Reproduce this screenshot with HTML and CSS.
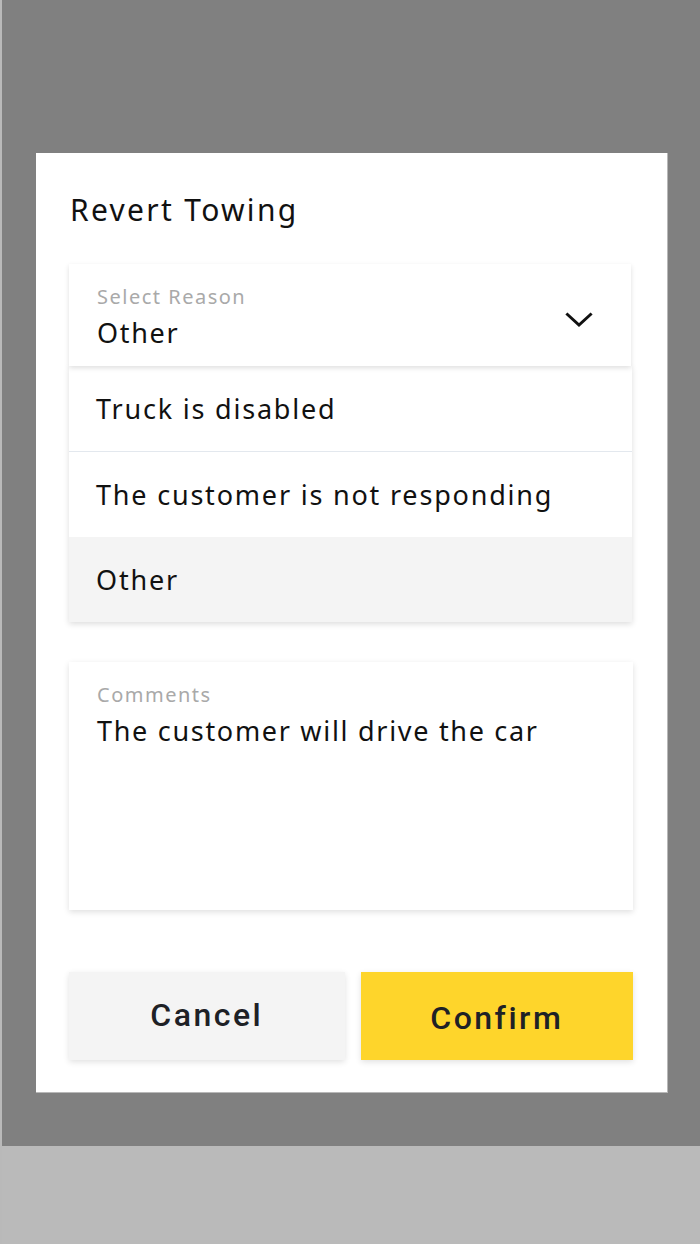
FILE: index.html
```html
<!DOCTYPE html>
<html lang="en">
<head>
<meta charset="utf-8">
<title>Revert Towing</title>
<link rel="stylesheet" href="styles.css">
</head>
<body>
<div class="screen">
  <div class="overlay">
    <div class="dialog">
      <h1 class="title">Revert Towing</h1>
      <div class="select-card">
        <div class="select-text">
          <div class="field-label">Select Reason</div>
          <div class="field-value">Other</div>
        </div>
        <svg class="chevron" width="28" height="16" viewBox="0 0 28 16" aria-hidden="true">
          <path d="M2.5 2.5 L14 13 L25.5 2.5" fill="none" stroke="#111" stroke-width="3" stroke-linecap="square"/>
        </svg>
      </div>
      <ul class="options">
        <li class="option option-divided">Truck is disabled</li>
        <li class="option">The customer is not responding</li>
        <li class="option option-selected">Other</li>
      </ul>
      <div class="comments-card">
        <div class="field-label">Comments</div>
        <div class="field-value">The customer will drive the car</div>
      </div>
      <div class="actions">
        <button class="btn btn-cancel">Cancel</button>
        <button class="btn btn-confirm">Confirm</button>
      </div>
    </div>
  </div>
  <div class="footer"></div>
</div>
</body>
</html>
```

FILE: styles.css
```css
* {
  box-sizing: border-box;
}

html, body {
  margin: 0;
  padding: 0;
}

body {
  font-family: "Noto Sans", "Liberation Sans", sans-serif;
  color: #111;
  background: #bababa;
}

.screen {
  width: 700px;
  height: 1244px;
  border-left: 2px solid #b9b9b9;
  display: flex;
  flex-direction: column;
}

.overlay {
  height: 1146px;
  background: #808080;
  padding-top: 153px;
  padding-left: 34px;
}

.footer {
  flex: 1;
  background: #bababa;
}

.dialog {
  width: 632px;
  height: 940px;
  background: #fff;
  border-right: 1px solid #b8b8b8;
  border-bottom: 1px solid #b8b8b8;
  padding: 38px 34px 0 33px;
  display: flex;
  flex-direction: column;
}

.title {
  margin: 0 0 35px 1px;
  font-size: 30px;
  line-height: 38px;
  font-weight: 400;
  letter-spacing: 2.3px;
  color: #111;
}

.select-card {
  position: relative;
  z-index: 2;
  height: 102px;
  margin-right: 2px;
  background: #fff;
  box-shadow: 0 2px 5px rgba(0, 0, 0, 0.13);
  padding: 21px 38px 0 28px;
  display: flex;
  align-items: flex-start;
}

.select-text {
  flex: 1;
}

.field-label {
  font-size: 20px;
  line-height: 24px;
  color: #a9a9a9;
  letter-spacing: 1.5px;
}

.field-value {
  margin-top: 7px;
  font-size: 27px;
  line-height: 34px;
  color: #111;
  letter-spacing: 1.7px;
}

.chevron {
  margin-top: 27px;
  display: block;
}

.options {
  list-style: none;
  margin: 0 1px 40px 0;
  padding: 0;
  background: #fff;
  box-shadow: 0 2px 6px rgba(0, 0, 0, 0.14);
}

.option {
  height: 85px;
  display: flex;
  align-items: center;
  padding-left: 27px;
  font-size: 27px;
  letter-spacing: 1.8px;
  color: #111;
}

.option-divided {
  border-bottom: 1px solid #e3e8ee;
  height: 86px;
}

.option-selected {
  background: #f4f4f4;
}

.comments-card {
  height: 248px;
  background: #fff;
  box-shadow: 0 2px 6px rgba(0, 0, 0, 0.13);
  padding: 21px 28px 0 28px;
  margin-bottom: 62px;
}

.actions {
  display: flex;
  gap: 16px;
  height: 88px;
}

.btn {
  border: none;
  margin: 0;
  font-family: Roboto, "Liberation Sans", sans-serif;
  font-size: 32px;
  font-weight: 500;
  letter-spacing: 2.5px;
  color: #1e2126;
  height: 88px;
  box-shadow: 0 2px 6px rgba(0, 0, 0, 0.12);
  cursor: pointer;
}

.btn-cancel {
  width: 276px;
  background: #f4f4f4;
  padding-bottom: 3px;
}

.btn-confirm {
  width: 273px;
  background: #fed52b;
  padding-top: 4px;
}
```
